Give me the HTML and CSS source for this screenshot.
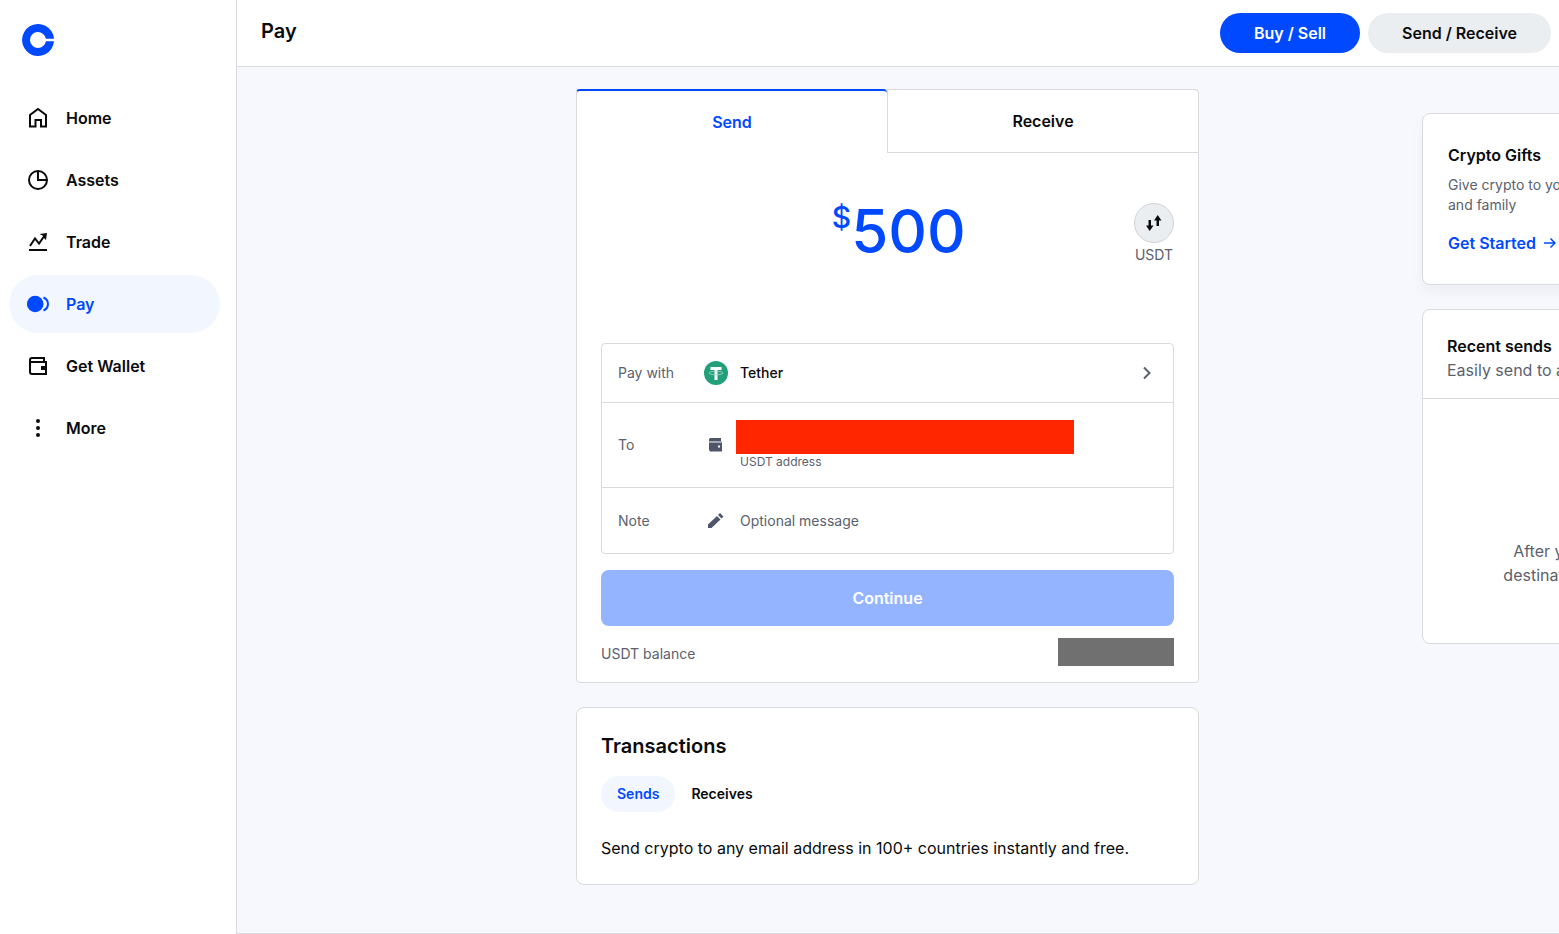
FILE: index.html
```html
<!DOCTYPE html>
<html lang="en">
    <head>
        <meta charset="utf-8">
        <title>Pay</title>
        <link rel="stylesheet" href="styles.css">
    </head>
    <body>
        <div class="sidebar">
            <a class="logo" href="#" aria-label="Coinbase">
                <svg width="32" height="32" viewBox="0 0 32 32"><path fill="#0049ff" d="M16 24a8 8 0 1 1 7.9-9.3H32A16 16 0 1 0 32 17.3H23.9A8 8 0 0 1 16 24z"/></svg>
            </a>
            <nav>
                <a href="#">
                    <svg width="24" height="24" viewBox="0 0 24 24"><path d="M4 20.500V9l8-6 8 6v11.500h-5V14H9.500v6.500z"/></svg>
                    Home
                </a>
                <a href="#">
                    <svg width="24" height="24" viewBox="0 0 24 24"><circle cx="12" cy="12" r="9"/><path d="M12 3v9h9"/></svg>
                    Assets
                </a>
                <a href="#">
                    <svg width="24" height="24" viewBox="0 0 24 24"><path d="M3 20h18M4 16l5-7.500 4 5L19 5"/><path class="fill" d="M13.500 4L21 3l-1 7-2.300-2.200-.2-1.800z"/></svg>
                    Trade
                </a>
                <a class="selected" href="#">
                    <svg width="24" height="24" viewBox="0 0 24 24"><circle class="fill" cx="9.200" cy="12" r="8.300"/><path d="M17.500 5.500c6 2.500 6 10.500 0 13"/></svg>
                    Pay
                </a>
                <a href="#">
                    <svg width="24" height="24" viewBox="0 0 24 24"><path d="M18 8V4H6a2 2 0 0 0-2 2v12a2 2 0 0 0 2 2h14V8H4"/><path class="fill" d="M15 12h6v4h-6z"/></svg>
                    Get Wallet
                </a>
                <a href="#">
                    <svg width="24" height="24" viewBox="0 0 24 24"><g class="fill"><circle cx="12" cy="5" r="2"/><circle cx="12" cy="12" r="2"/><circle cx="12" cy="19" r="2"/></g></svg>
                    More
                </a>
            </nav>
        </div>
        <div class="page">
            <header>
                <h1>Pay</h1>
                <button class="pill blue">Buy / Sell</button>
                <button class="pill gray">Send / Receive</button>
            </header>
            <main>
                <div class="center">
                    <form class="card send">
                        <div class="tabs">
                            <button type="button" class="active">Send</button>
                            <button type="button">Receive</button>
                        </div>
                        <div class="amountrow">
                            <div class="amount">
                                <label for="amount">$</label>
                                <input id="amount" type="text" value="500">
                            </div>
                            <div class="swap">
                                <button type="button" aria-label="Switch currency">
                                    <svg width="16" height="16" viewBox="0 0 16 16"><path fill="#0a0b0d" d="M2.500 5H5v5.500h2.500L3.700 16 0 10.500h2.500zM10.500 11V5.500H8L11.700 0l3.800 5.500H13V11z"/></svg>
                                </button>
                                <span>USDT</span>
                            </div>
                        </div>
                        <div class="details">
                            <div class="row">
                                <span class="name">Pay with</span>
                                <span class="icon">
                                    <svg width="24" height="24" viewBox="0 0 24 24"><circle cx="12" cy="12" r="12" fill="#22a079"/><path fill="#fff" d="M6.500 6h11v3h-4v10h-3V9h-4z"/><ellipse cx="12" cy="12" rx="7" ry="1.800" fill="none" stroke="#a5d9c9" stroke-width=".8"/></svg>
                                </span>
                                <span class="coin">Tether</span>
                                <button type="button" class="next" aria-label="Choose asset">
                                    <svg width="20" height="20" viewBox="0 0 20 20"><path fill="none" stroke="#5b616e" stroke-width="2" d="M7 4.500l5.500 5.500L7 15.500"/></svg>
                                </button>
                            </div>
                            <div class="row to">
                                <span class="name">To</span>
                                <span class="icon">
                                    <svg width="24" height="24" viewBox="0 0 24 24"><path fill="#a3a7b0" d="M5 8h13v3H5zM6 17h12v2H6z"/><path fill="#50566a" d="M6.500 5H17v3H5V6.500A1.500 1.500 0 0 1 6.500 5zM5 10h13v8H6.500A1.500 1.500 0 0 1 5 16.500z"/><path fill="#fff" d="M14 12.500h2v2h-2z"/></svg>
                                </span>
                                <div>
                                    <div class="address"></div>
                                    <small>USDT address</small>
                                </div>
                            </div>
                            <div class="row note">
                                <label class="name" for="note">Note</label>
                                <span class="icon">
                                    <svg width="24" height="24" viewBox="0 0 24 24"><path fill="#50566a" d="M4 15.500l9-8.500 3.500 3.500-9 8.500H4zM14 6l2-2 3.500 3.500-2 2z"/></svg>
                                </span>
                                <input id="note" type="text" placeholder="Optional message">
                            </div>
                        </div>
                        <button class="continue" disabled>Continue</button>
                        <div class="balance">
                            <span>USDT balance</span>
                            <div class="value"></div>
                        </div>
                    </form>
                    <section class="card transactions">
                        <h2>Transactions</h2>
                        <div class="filters">
                            <button class="active">Sends</button>
                            <button>Receives</button>
                        </div>
                        <p>Send crypto to any email address in 100+ countries instantly and free.</p>
                    </section>
                </div>
                <aside>
                    <section class="card gifts">
                        <h3>Crypto Gifts</h3>
                        <p>Give crypto to your friends<br>and family</p>
                        <a href="#">Get Started
                            <svg width="12" height="12" viewBox="0 0 12 12"><path fill="none" stroke="#0049ff" stroke-width="1.500" d="M0 6h11M6.500 1.500L11 6l-4.500 4.500"/></svg>
                        </a>
                    </section>
                    <section class="card recent">
                        <div class="top">
                            <h3>Recent sends</h3>
                            <p>Easily send to a recent contact</p>
                        </div>
                        <p class="empty">After your sends,<br>destinations appear</p>
                    </section>
                </aside>
            </main>
        </div>
    </body>
</html>
```

FILE: styles.css
```css
*{
    box-sizing: border-box;
}
body{
    margin: 0;
    display: flex;
    min-height: 100vh;
    overflow-x: hidden;
    color: #0a0b0d;
    font-family: Inter, "Liberation Sans", sans-serif;
    font-size: 16px;
    line-height: 24px;
}
h1, h2, h3, p{
    margin: 0;
}
h3{
    font-size: 16px;
    font-weight: 600;
}
a{
    color: inherit;
    text-decoration: none;
}
button, input{
    font: inherit;
    color: inherit;
    border: none;
    background: none;
    padding: 0;
}
button{
    cursor: pointer;
}
svg{
    display: block;
    flex: none;
}

/* sidebar */
.sidebar{
    flex: none;
    width: 237px;
    border-right: 1px solid #d8dade;
    background: white;
}
.logo{
    display: block;
    padding: 24px 22px 0;
}
nav{
    display: flex;
    flex-direction: column;
    gap: 4px;
    padding: 33px 16px 0 9px;
}
nav a{
    display: flex;
    align-items: center;
    gap: 16px;
    height: 58px;
    padding-left: 17px;
    border-radius: 29px;
    font-weight: 600;
}
nav svg{
    fill: none;
    stroke: currentColor;
    stroke-width: 2;
}
nav .fill{
    fill: currentColor;
    stroke: none;
}
nav .selected{
    background: #f2f7ff;
    color: #0049ff;
}

/* header */
.page{
    flex: 1;
    min-width: 0;
    display: flex;
    flex-direction: column;
}
header{
    display: flex;
    align-items: center;
    gap: 8px;
    padding: 13px 8px 13px 24px;
    border-bottom: 1px solid #d8dade;
}
h1{
    flex: 1;
    padding-bottom: 4px;
    font-size: 20px;
    font-weight: 600;
}
.pill{
    height: 40px;
    padding: 0 34px;
    border-radius: 20px;
    font-weight: 600;
}
.blue{
    background: #0049ff;
    color: white;
}
.gray{
    background: #ebeef1;
}

/* content */
main{
    flex: 1;
    display: grid;
    grid-template-columns: 339fr 623fr 223fr minmax(0, 137fr);
    padding: 22px 0 48px;
    background: #f7f8fd;
    border-bottom: 1px solid #d8dade;
}
.center{
    grid-column: 2;
    min-width: 0;
    display: flex;
    flex-direction: column;
    gap: 24px;
}
.card{
    background: white;
    border: 1px solid #d8dade;
    border-radius: 8px;
}
.send{
    border-radius: 4px;
    padding-bottom: 16px;
}
.tabs{
    display: flex;
    margin: -1px 0 0 -1px;
}
.tabs button{
    flex: 1;
    height: 64px;
    border: solid #d8dade;
    border-width: 1px 0 1px 1px;
    border-radius: 0 4px 0 0;
    font-weight: 600;
}
.tabs .active{
    border-width: 2px 0 0 1px;
    border-top-color: #0049ff;
    border-radius: 4px 4px 0 0;
    color: #0049ff;
}
.amountrow{
    display: flex;
    align-items: flex-start;
    height: 190px;
    padding: 48px 24px 0;
}
.amount{
    flex: 1;
    display: flex;
    justify-content: center;
    padding-left: 60px;
    color: #0049ff;
    font-weight: 500;
}
.amount label{
    font-size: 30px;
    line-height: 32px;
}
.amount input{
    width: 112px;
    height: 60px;
    font-size: 60px;
}
.swap{
    width: 40px;
    padding-top: 2px;
    color: #5b616e;
    font-size: 14px;
    text-align: center;
}
.swap button{
    display: grid;
    place-items: center;
    width: 40px;
    height: 40px;
    border: 1px solid #d0d3d8;
    border-radius: 50%;
    background: #ebeef1;
}
.details{
    margin: 0 24px;
    border: 1px solid #d8dade;
    border-radius: 4px;
    font-size: 14px;
    line-height: 20px;
}
.row{
    display: flex;
    align-items: center;
    height: 59px;
    padding: 0 16px;
    border-bottom: 1px solid #d8dade;
}
.to{
    height: 85px;
}
.note{
    height: 65px;
    border-bottom: none;
}
.name{
    flex: none;
    width: 86px;
    color: #5b616e;
}
.icon{
    margin-right: 12px;
}
.coin{
    flex: 1;
    font-weight: 500;
}
.address{
    width: 338px;
    height: 34px;
    margin-left: -4px;
    background: #ff2600;
}
small{
    display: block;
    font-size: 12px;
    line-height: 16px;
    color: #5b616e;
}
.note input{
    flex: 1;
}
.note input::placeholder{
    color: #5b616e;
}
.continue{
    display: block;
    width: calc(100% - 48px);
    height: 56px;
    margin: 16px 24px 12px;
    border-radius: 8px;
    background: #94b4ff;
    color: white;
    font-weight: 600;
}
.balance{
    display: flex;
    align-items: flex-end;
    justify-content: space-between;
    padding: 0 24px;
    font-size: 14px;
    color: #5b616e;
}
.value{
    width: 116px;
    height: 28px;
    background: #707070;
}
.transactions{
    padding: 24px;
}
h2{
    font-size: 20px;
    line-height: 28px;
    font-weight: 600;
}
.filters{
    display: flex;
    margin: 16px 0 24px;
}
.filters button{
    height: 36px;
    padding: 0 16px;
    border-radius: 18px;
    font-size: 14px;
    font-weight: 600;
}
.filters .active{
    background: #f2f7ff;
    color: #0049ff;
}

/* right column */
aside{
    grid-column: 4;
    display: flex;
    flex-direction: column;
    gap: 24px;
    width: 312px;
    padding-top: 24px;
}
.gifts{
    padding: 29px 25px;
    box-shadow: 0 8px 12px rgba(91, 97, 110, 0.06);
}
.gifts p{
    margin: 8px 0 16px;
    font-size: 14px;
    line-height: 20px;
    color: #5b616e;
}
.gifts a{
    display: flex;
    align-items: center;
    gap: 8px;
    color: #0049ff;
    font-weight: 600;
}
.recent{
    color: #5b616e;
}
.recent h3{
    color: #0a0b0d;
}
.top{
    padding: 24px 24px 16px;
    border-bottom: 1px solid #d8dade;
}
.empty{
    padding: 140px 24px 56px;
    text-align: center;
}
```
